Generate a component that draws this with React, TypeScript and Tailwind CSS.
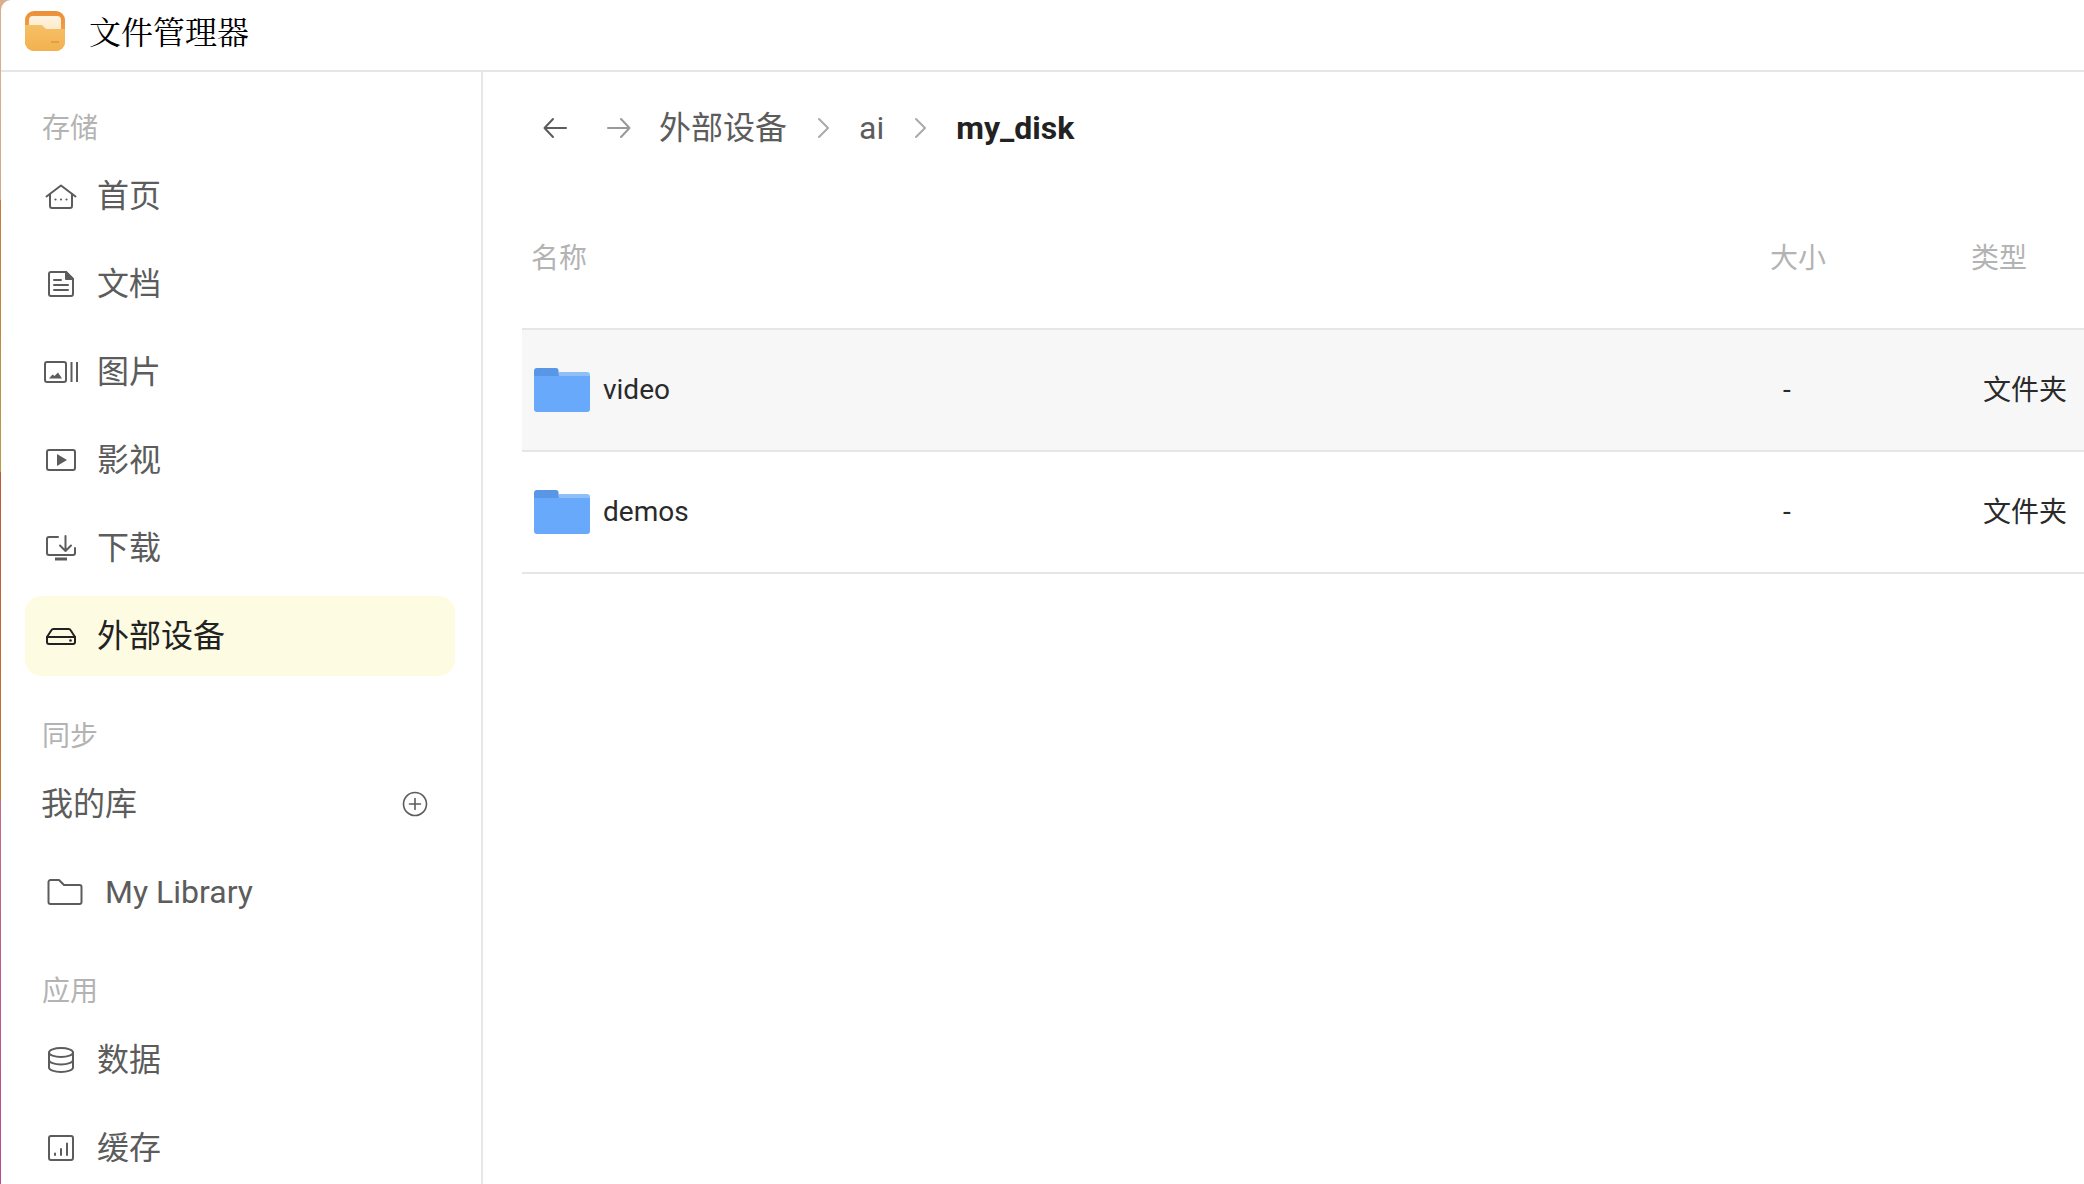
import React from "react";

const Ic = ({ children, w = 36 }: { children: React.ReactNode; w?: number }) => (
  <svg width={w} height={30} viewBox={`0 0 ${w} 30`} fill="none" stroke="currentColor" strokeWidth={2} strokeLinecap="round" strokeLinejoin="round" className="shrink-0">
    {children}
  </svg>
);

const Home = () => (
  <Ic>
    <path d="M3.5 15.5 L18 4.5 L32.5 15.5" />
    <path d="M7 13 V25 a2 2 0 0 0 2 2 H27 a2 2 0 0 0 2-2 V13" />
    <g fill="currentColor" stroke="none">
      <circle cx="12.5" cy="18.5" r="1.1" />
      <circle cx="18" cy="18.5" r="1.1" />
      <circle cx="23.5" cy="18.5" r="1.1" />
    </g>
  </Ic>
);
const Doc = () => (
  <Ic>
    <path d="M8 3 H23 L30 10 V25 a2 2 0 0 1-2 2 H8 a2 2 0 0 1-2-2 V5 a2 2 0 0 1 2-2 Z" />
    <path d="M23 3 L30 10 H23 Z" fill="currentColor" />
    <path d="M11 11 H18 M11 16 H25 M11 21 H25" />
  </Ic>
);
const Pic = () => (
  <Ic>
    <rect x="2" y="5" width="21" height="20" rx="2" />
    <path d="M6 21.5 L9.5 17.5 L11.5 19 L15 15.5 L19 21.5 Z" fill="currentColor" stroke="none" />
    <path d="M28.5 5 V25 M34 5 V25" strokeLinecap="butt" />
  </Ic>
);
const Video = () => (
  <Ic>
    <rect x="4" y="5" width="28" height="20" rx="2" />
    <path d="M14 9 L24 15 L14 21 Z" fill="currentColor" stroke="none" />
  </Ic>
);
const Download = () => (
  <Ic>
    <path d="M15 4 H6 a2 2 0 0 0-2 2 V20 a2 2 0 0 0 2 2 H30 a2 2 0 0 0 2-2 V15" />
    <path d="M22.5 3 V18 M17 12.5 L22.5 18 L28 12.5" />
    <rect x="12" y="24.5" width="12" height="3" fill="currentColor" stroke="none" />
  </Ic>
);
const Disk = () => (
  <Ic>
    <path d="M4 16 V21 a2 2 0 0 0 2 2 H30 a2 2 0 0 0 2-2 V16 Z" />
    <path d="M4 16 L8.5 9 a2 2 0 0 1 1.8-1 H25.7 a2 2 0 0 1 1.8 1 L32 16" />
    <circle cx="27.5" cy="19.5" r="1.3" fill="currentColor" stroke="none" />
  </Ic>
);
const Db = () => (
  <Ic>
    <ellipse cx="18" cy="7.5" rx="12" ry="4.5" />
    <path d="M6 7.5 V22.5 c0 2.5 5.4 4.5 12 4.5 s12-2 12-4.5 V7.5" />
    <path d="M6 15 c0 2.5 5.4 4.5 12 4.5 s12-2 12-4.5" />
  </Ic>
);
const Chart = () => (
  <Ic>
    <rect x="6" y="3" width="24" height="24" rx="2" />
    <path d="M12 22 V20.5 M18 22 V16 M24 22 V10.5" />
  </Ic>
);
const OutlineFolder = () => (
  <Ic>
    <path d="M1.5 5 a2 2 0 0 1 2-2 H12 L17 8 H32.5 a2 2 0 0 1 2 2 V25 a2 2 0 0 1-2 2 H3.5 a2 2 0 0 1-2-2 Z" />
  </Ic>
);

const BlueFolder = () => (
  <svg width="56" height="44" viewBox="0 0 56 44" className="shrink-0">
    <path d="M0 3 a3 3 0 0 1 3-3 H22 a2.5 2.5 0 0 1 2.5 2.5 L25 8 V20 H0 Z" fill="#5a96e6" />
    <path d="M25 4 H53 a3 3 0 0 1 3 3 V12 H25 Z" fill="#90bff6" />
    <path d="M0 8 H56 V41 a3 3 0 0 1-3 3 H3 a3 3 0 0 1-3-3 Z" fill="#68a9fb" />
  </svg>
);

const AppIcon = () => (
  <svg width="40" height="40" viewBox="0 0 40 40" className="shrink-0">
    <defs>
      <linearGradient id="outer" x1="0" y1="0" x2="0" y2="1">
        <stop offset="0" stopColor="#ec8f38" />
        <stop offset="1" stopColor="#f3b050" />
      </linearGradient>
      <linearGradient id="paper" x1="0" y1="0" x2="0" y2="1">
        <stop offset="0" stopColor="#fff4e0" />
        <stop offset="1" stopColor="#fbe3bc" />
      </linearGradient>
      <linearGradient id="front" x1="0" y1="0" x2="0" y2="1">
        <stop offset="0" stopColor="#f6c066" />
        <stop offset="1" stopColor="#f2b150" />
      </linearGradient>
    </defs>
    <rect width="40" height="40" rx="9" fill="url(#outer)" />
    <rect x="4" y="5" width="32" height="22" rx="4" fill="url(#paper)" />
    <path d="M0 14 H16 a3 3 0 0 1 2 1 L21 18 H40 V31 a9 9 0 0 1-9 9 H9 a9 9 0 0 1-9-9 Z" fill="url(#front)" />
    <path d="M26 31 H34" stroke="#d98f3a" strokeWidth="1.2" />
  </svg>
);

const NavItem = ({ icon, label, active }: { icon: React.ReactNode; label: string; active?: boolean }) => (
  <div className={`flex items-center h-[80px] mb-2 pl-[18px] gap-[18px] rounded-[16px] text-[32px] ${active ? "bg-[#fefbe3] text-[#222222]" : "text-[#5c5c5c]"}`}>
    {icon}
    <span>{label}</span>
  </div>
);

const Label = ({ children, cls }: { children: React.ReactNode; cls: string }) => (
  <div className={`h-[40px] leading-[40px] pl-[17px] text-[28px] text-[#b3b3b3] ${cls}`}>{children}</div>
);

const Chev = () => (
  <svg width="12" height="22" viewBox="0 0 12 22" fill="none" stroke="#aaaaaa" strokeWidth="2" strokeLinecap="round" strokeLinejoin="round" className="shrink-0">
    <path d="M2 2 L11 11 L2 20" />
  </svg>
);
const Arrow = ({ left, color }: { left?: boolean; color: string }) => (
  <svg width="24" height="24" viewBox="0 0 24 24" fill="none" stroke={color} strokeWidth="2" strokeLinecap="round" strokeLinejoin="round" className="shrink-0">
    {left ? <path d="M23 12 H1.5 M10 3 L1.5 12 L10 21" /> : <path d="M1 12 H22.5 M14 3 L22.5 12 L14 21" />}
  </svg>
);

const Row = ({ name, hover }: { name: string; hover?: boolean }) => (
  <div className={`grid grid-cols-[1fr_201px_113px] items-center h-[122px] border-b-2 border-[#e6e6e6] text-[28px] text-[#2a2a2a] ${hover ? "bg-[#f7f7f7]" : ""}`}>
    <div className="flex items-center pl-[12px] gap-[13px]">
      <BlueFolder />
      <span>{name}</span>
    </div>
    <div className="pl-[13px]">-</div>
    <div className="pl-[12px] pt-[2px]">文件夹</div>
  </div>
);

export default function App() {
  return (
    <div className="flex h-[1184px] w-full overflow-hidden bg-[linear-gradient(to_bottom,#d9b08f_0,#d4a98a_200px,#c67a3c_200px,#b89c48_472px,#c2553a_472px,#c17a30_800px,#c46a84_800px,#b84a92_1184px)] font-['Roboto','Noto_Sans_CJK_SC',sans-serif]">
      <div className="flex flex-col flex-1 min-w-0 ml-[1px] bg-white rounded-tl-[10px]">
        <header className="flex items-center h-[72px] shrink-0 pl-[24px] gap-[24px] pb-[8px] border-b-2 border-[#e6e6e6]">
          <AppIcon />
          <span className="mb-[2px] text-[32px] text-black font-['Noto_Serif_CJK_SC','Liberation_Serif',serif]">文件管理器</span>
        </header>
        <div className="flex flex-1 min-h-0">
          <aside className="w-[482px] shrink-0 border-r-2 border-[#e6e6e6] pt-[37px] pl-[24px] pr-[26px]">
            <Label cls="mb-[7px]">存储</Label>
            <NavItem icon={<Home />} label="首页" />
            <NavItem icon={<Doc />} label="文档" />
            <NavItem icon={<Pic />} label="图片" />
            <NavItem icon={<Video />} label="影视" />
            <NavItem icon={<Download />} label="下载" />
            <NavItem icon={<Disk />} label="外部设备" active />
            <Label cls="mt-[41px] mb-[7px]">同步</Label>
            <div className="flex items-center justify-between h-[80px] mb-2 pl-[16px] pr-[27px] text-[32px] text-[#5c5c5c]">
              <span>我的库</span>
              <svg width="26" height="26" viewBox="0 0 26 26" fill="none" stroke="#5c5c5c" strokeWidth="1.6" strokeLinecap="round">
                <circle cx="13" cy="13" r="11.5" />
                <path d="M13 7.5 V18.5 M7.5 13 H18.5" />
              </svg>
            </div>
            <div className="flex items-center h-[80px] mb-2 pl-[22px] gap-[22px] text-[32px] text-[#5c5c5c]">
              <OutlineFolder />
              <span>My Library</span>
            </div>
            <Label cls="mt-[40px] mb-[8px]">应用</Label>
            <NavItem icon={<Db />} label="数据" />
            <NavItem icon={<Chart />} label="缓存" />
          </aside>
          <main className="flex-1 min-w-0 pl-[39px]">
            <div className="flex items-center h-[112px] pl-[21px] text-[32px] text-[#5c5c5c]">
              <Arrow left color="#5c5c5c" />
              <div className="ml-[40px]"><Arrow color="#999999" /></div>
              <span className="ml-[28px]">外部设备</span>
              <div className="ml-[30px]"><Chev /></div>
              <span className="ml-[30px]">ai</span>
              <div className="ml-[30px]"><Chev /></div>
              <span className="ml-[30px] font-bold text-[#222222]">my_disk</span>
            </div>
            <div className="grid grid-cols-[1fr_201px_113px] items-center h-[146px] pt-[6px] border-b-2 border-[#e6e6e6] text-[28px] text-[#b3b3b3]">
              <div className="pl-[9px]">名称</div>
              <div>大小</div>
              <div>类型</div>
            </div>
            <Row name="video" hover />
            <Row name="demos" />
          </main>
        </div>
      </div>
    </div>
  );
}
